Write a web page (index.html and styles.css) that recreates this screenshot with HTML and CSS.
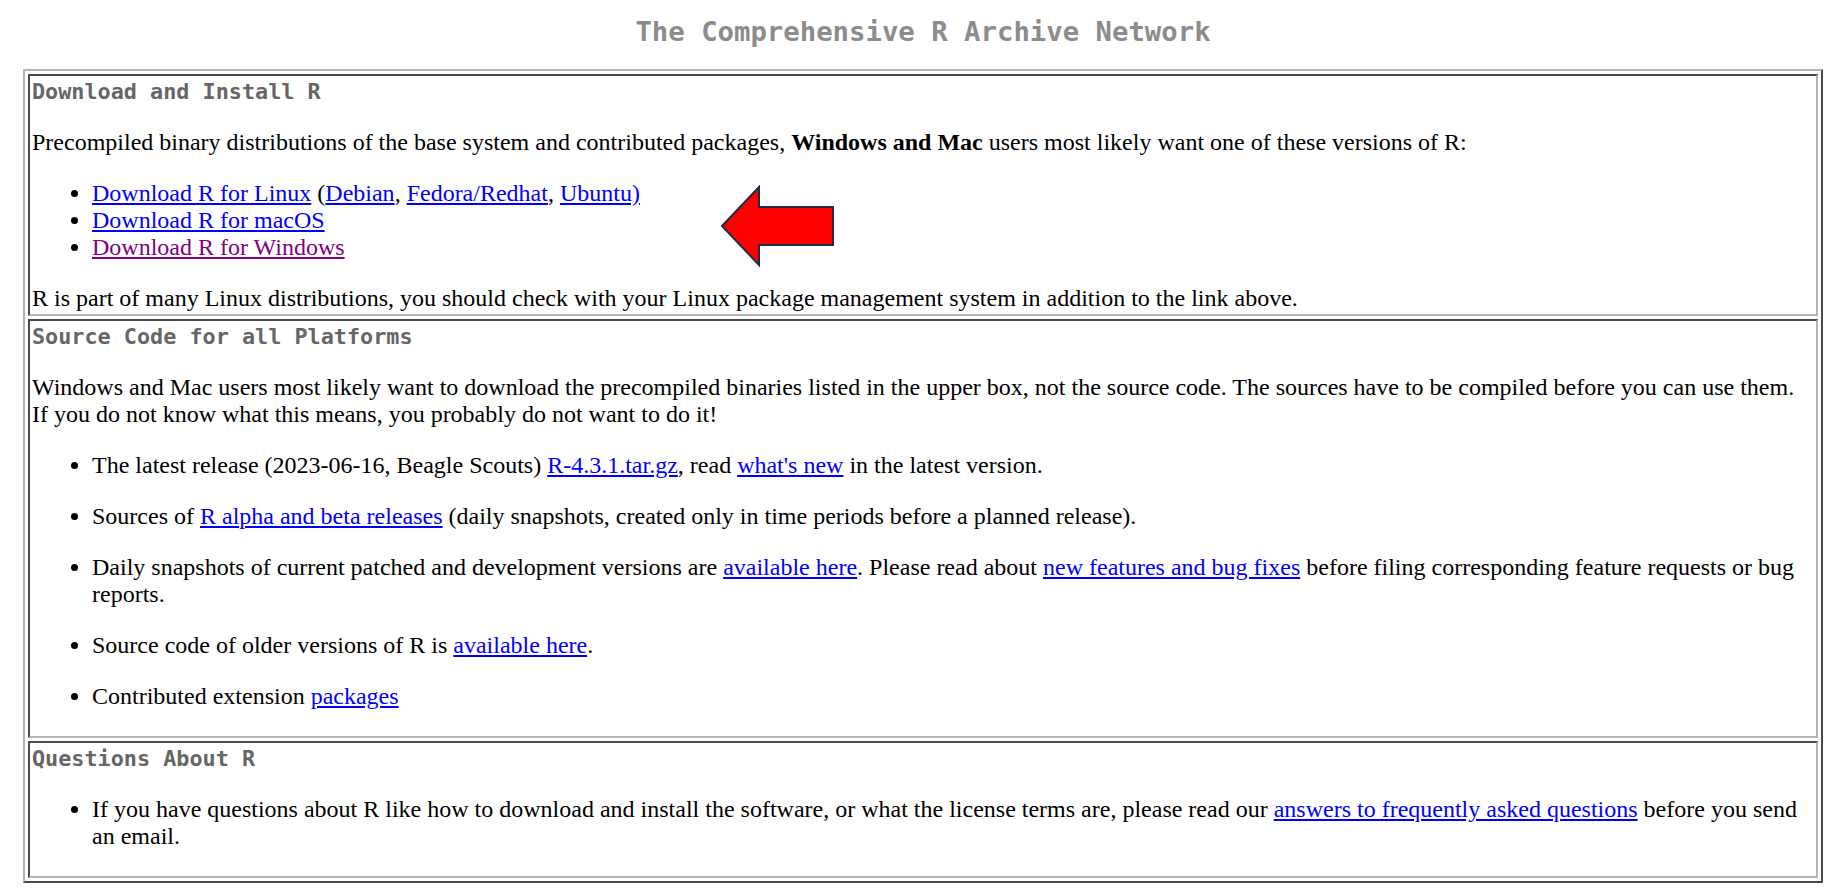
FILE: index.html
```html
<!DOCTYPE html>
<html>
<head>
<meta charset="utf-8">
<title>The Comprehensive R Archive Network</title>
<link rel="stylesheet" href="styles.css">
</head>
<body>
<div class="page">
  <h1 class="title">The Comprehensive R Archive Network</h1>
  <table class="main">
    <tr>
      <td>
        <h2>Download and Install R</h2>
        <p>Precompiled binary distributions of the base system and contributed packages, <b>Windows and Mac</b> users most likely want one of these versions of R:</p>
        <ul class="tight">
          <li><a href="#">Download R for Linux</a> (<a href="#">Debian</a>, <a href="#">Fedora/Redhat</a>, <a href="#">Ubuntu)</a></li>
          <li><a href="#">Download R for macOS</a></li>
          <li><a href="#" class="visited">Download R for Windows</a></li>
        </ul>
        <p class="last">R is part of many Linux distributions, you should check with your Linux package management system in addition to the link above.</p>
      </td>
    </tr>
    <tr>
      <td>
        <h2>Source Code for all Platforms</h2>
        <p>Windows and Mac users most likely want to download the precompiled binaries listed in the upper box, not the source code. The sources have to be compiled before you can use them. If you do not know what this means, you probably do not want to do it!</p>
        <ul>
          <li><p>The latest release (2023-06-16, Beagle Scouts) <a href="#">R-4.3.1.tar.gz</a>, read <a href="#">what's new</a> in the latest version.</p></li>
          <li><p>Sources of <a href="#">R alpha and beta releases</a> (daily snapshots, created only in time periods before a planned release).</p></li>
          <li><p>Daily snapshots of current patched and development versions are <a href="#">available here</a>. Please read about <a href="#">new features and bug fixes</a> before filing corresponding feature requests or bug reports.</p></li>
          <li><p>Source code of older versions of R is <a href="#">available here</a>.</p></li>
          <li><p>Contributed extension <a href="#">packages</a></p></li>
        </ul>
      </td>
    </tr>
    <tr>
      <td>
        <h2>Questions About R</h2>
        <ul>
          <li><p>If you have questions about R like how to download and install the software, or what the license terms are, please read our <a href="#">answers to frequently asked questions</a> before you send an email.</p></li>
        </ul>
      </td>
    </tr>
  </table>
  <svg class="arrow" width="116" height="83" viewBox="0 0 116 83" aria-hidden="true">
    <polygon points="2,41 39,2 39,22 113,22 113,60 39,60 39,80" fill="#ff0000" stroke="#1f2a4a" stroke-width="2" stroke-linejoin="miter"/>
  </svg>
</div>
</body>
</html>
```

FILE: styles.css
```css
html, body {
  margin: 0;
  padding: 0;
  background: #ffffff;
}

body {
  color: #000000;
  font-family: "Liberation Serif", "Times New Roman", serif;
  font-size: 24px;
  line-height: 27px;
}

.page {
  position: relative;
  padding: 0 24px 0 23px;
}

.title {
  margin: 0;
  padding: 16px 0 21px;
  font-family: "DejaVu Sans Mono", "Liberation Mono", monospace;
  font-size: 27.3px;
  line-height: 32px;
  font-weight: bold;
  color: #8c8c8c;
  text-align: center;
}

.main {
  width: 100%;
  border-collapse: separate;
  border-spacing: 3px;
  border: 2px solid;
  border-color: #b4b4b4 #4a4a4a #4a4a4a #b4b4b4;
}

.main td {
  border: 2px solid;
  border-color: #4a4a4a #b4b4b4 #b4b4b4 #4a4a4a;
  padding: 2px;
  vertical-align: top;
}

h2 {
  margin: 0 0 24px;
  font-family: "DejaVu Sans Mono", "Liberation Mono", monospace;
  font-size: 21.8px;
  line-height: 27px;
  font-weight: bold;
  color: #666666;
}

p {
  margin: 24px 0;
}

p.last {
  margin-bottom: 0;
}

ul {
  margin: 24px 0;
  padding-left: 60px;
}

li p {
  margin: 24px 0;
}

a {
  color: #0000ff;
  text-decoration: underline;
}

a.visited {
  color: #800080;
}

.arrow {
  position: absolute;
  left: 720px;
  top: 185px;
}
```
